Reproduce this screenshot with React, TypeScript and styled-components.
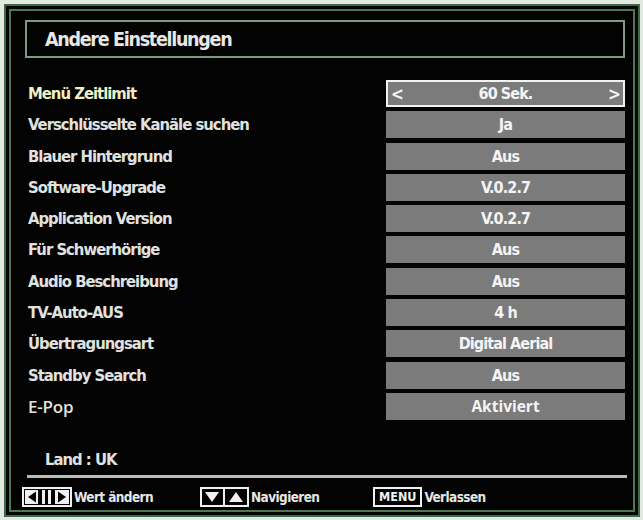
import React from 'react';
import styled, { createGlobalStyle } from 'styled-components';

const GlobalStyle = createGlobalStyle`
  html, body {
    margin: 0;
    padding: 0;
    background: #e2e9e1;
  }
  body {
    font-family: "DejaVu Sans", sans-serif;
  }
`;

const condensed = `
  font-family: "DejaVu Sans Condensed", "DejaVu Sans", sans-serif;
  font-stretch: condensed;
  font-weight: bold;
`;

const plain = `
  font-family: "Open Sans", sans-serif;
  font-stretch: normal;
`;

const Frame = styled.div`
  margin: 4px 0 0 4px;
  width: 636px;
  height: 513px;
  box-sizing: border-box;
  background: #020302;
  border: 2px solid #3d6a45;
  box-shadow: inset 0 0 0 3px #030503, inset 0 0 0 5px #4f7555;
  padding: 14px 13px 0 19px;
  display: flex;
  flex-direction: column;
`;

const TitleBox = styled.div`
  height: 38px;
  box-sizing: border-box;
  border: 2px solid #7f9a82;
  display: flex;
  align-items: center;
  padding-left: 18px;
`;

const Title = styled.h1`
  margin: 0;
  ${condensed}
  font-size: 19.5px;
  color: #e6e8e6;
  letter-spacing: -1.3px;
`;

const List = styled.div`
  margin-top: 22px;
  display: flex;
  flex-direction: column;
  gap: 4.3px;
`;

const Row = styled.div`
  display: flex;
  align-items: center;
  justify-content: space-between;
  height: 27px;
  padding-left: 3px;
`;

const Label = styled.span<{ $active?: boolean; $plain?: boolean }>`
  ${p =>
    p.$plain
      ? `${plain} font-weight: 600; font-size: 17px; letter-spacing: -0.2px;`
      : `${condensed} font-size: 16.5px; letter-spacing: -1px;`}
  color: ${p => (p.$active ? '#f1efc6' : '#e0e2e0')};
`;

const Value = styled.div<{ $active?: boolean; $plain?: boolean }>`
  width: 239px;
  height: 27px;
  box-sizing: border-box;
  background: #7b7b7b;
  border: ${p => (p.$active ? '2px solid #f2f2f2' : 'none')};
  display: flex;
  align-items: center;
  justify-content: space-between;
  padding: 0 3px;
  color: #f4f4f4;
  ${p =>
    p.$plain
      ? `${plain} font-weight: bold; font-size: 15.5px;`
      : `${condensed} font-size: 16px; letter-spacing: -0.9px;`}
`;

const ValueText = styled.span`
  flex: 1;
  text-align: center;
`;

const Chevron = styled.span`
  width: 12px;
  font-family: "DejaVu Sans", sans-serif;
  font-size: 17px;
  font-weight: bold;
`;

const Spacer = styled.div`
  flex: 1;
`;

const Land = styled.div`
  padding-left: 20px;
  ${condensed}
  font-size: 16.5px;
  letter-spacing: -1px;
  color: #e0e2e0;
  margin-bottom: 6px;
`;

const Separator = styled.hr`
  margin: 0 0 0 2px;
  border: none;
  height: 3px;
  background: #b9bcb9;
  width: 600px;
`;

const Footer = styled.div`
  display: flex;
  align-items: center;
  height: 37px;
  margin-left: -3px;
`;

const Hint = styled.div<{ $width: number }>`
  display: flex;
  align-items: center;
  gap: 2px;
  width: ${p => p.$width}px;
`;

const HintText = styled.span`
  ${condensed}
  font-size: 13.5px;
  letter-spacing: -0.6px;
  color: #e6e6e6;
`;

const KeyBox = styled.span`
  display: inline-flex;
  align-items: center;
  height: 20px;
  box-sizing: border-box;
  border: 2px solid #f0f0f0;
  padding: 0 4px;
  ${condensed}
  font-size: 12.5px;
  color: #f0f0f0;
`;

const LeftRightKey = () => (
  <svg width="50" height="20" viewBox="0 0 50 20">
    <rect x="1" y="1" width="48" height="18" fill="none" stroke="#f0f0f0" strokeWidth="2" />
    <rect x="3" y="3" width="13" height="14" fill="#f0f0f0" />
    <polygon points="6,10 14,4.5 14,15.5" fill="#000" />
    <rect x="20" y="3" width="3" height="14" fill="#f0f0f0" />
    <rect x="26" y="3" width="3" height="14" fill="#f0f0f0" />
    <rect x="33" y="3" width="14" height="14" fill="#f0f0f0" />
    <polygon points="44,10 36,4.5 36,15.5" fill="#000" />
  </svg>
);

const UpDownKey = () => (
  <svg width="49" height="20" viewBox="0 0 49 20">
    <rect x="1" y="1" width="47" height="18" fill="none" stroke="#f0f0f0" strokeWidth="2" />
    <rect x="23" y="1" width="2" height="18" fill="#f0f0f0" />
    <polygon points="5,5 19,5 12,15" fill="#f0f0f0" />
    <polygon points="29,15 43,15 36,5" fill="#f0f0f0" />
  </svg>
);

type Item = { label: string; value: string; active?: boolean; plain?: boolean };

const items: Item[] = [
  { label: 'Menü Zeitlimit', value: '60 Sek.', active: true },
  { label: 'Verschlüsselte Kanäle suchen', value: 'Ja' },
  { label: 'Blauer Hintergrund', value: 'Aus' },
  { label: 'Software-Upgrade', value: 'V.0.2.7' },
  { label: 'Application Version', value: 'V.0.2.7' },
  { label: 'Für Schwerhörige', value: 'Aus' },
  { label: 'Audio Beschreibung', value: 'Aus' },
  { label: 'TV-Auto-AUS', value: '4 h' },
  { label: 'Übertragungsart', value: 'Digital Aerial' },
  { label: 'Standby Search', value: 'Aus' },
  { label: 'E-Pop', value: 'Aktiviert', plain: true },
];

const App = () => (
  <>
    <GlobalStyle />
    <Frame>
      <TitleBox>
        <Title>Andere Einstellungen</Title>
      </TitleBox>

      <List>
        {items.map(item => (
          <Row key={item.label}>
            <Label $active={item.active} $plain={item.plain}>{item.label}</Label>
            <Value $active={item.active} $plain={item.plain}>
              <Chevron>{item.active ? '<' : ''}</Chevron>
              <ValueText>{item.value}</ValueText>
              <Chevron>{item.active ? '>' : ''}</Chevron>
            </Value>
          </Row>
        ))}
      </List>

      <Spacer />
      <Land>Land : UK</Land>
      <Separator />

      <Footer>
        <Hint $width={178}>
          <LeftRightKey />
          <HintText>Wert ändern</HintText>
        </Hint>
        <Hint $width={173}>
          <UpDownKey />
          <HintText>Navigieren</HintText>
        </Hint>
        <Hint $width={150}>
          <KeyBox>MENU</KeyBox>
          <HintText>Verlassen</HintText>
        </Hint>
      </Footer>
    </Frame>
  </>
);

export default App;
